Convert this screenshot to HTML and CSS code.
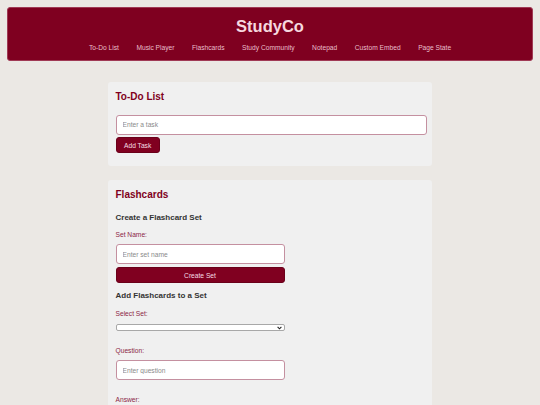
FILE: index.html
```html
<!DOCTYPE html>
<html lang="en">
<head>
<meta charset="utf-8">
<title>StudyCo</title>
<link rel="stylesheet" href="styles.css">
</head>
<body>
<header class="site-header">
  <h1 class="brand">StudyCo</h1>
  <nav class="nav">
    <a href="#">To-Do List</a>
    <a href="#">Music Player</a>
    <a href="#">Flashcards</a>
    <a href="#">Study Community</a>
    <a href="#">Notepad</a>
    <a href="#">Custom Embed</a>
    <a href="#">Page State</a>
  </nav>
</header>
<main class="main">
  <section class="panel todo">
    <h2 class="panel-title">To-Do List</h2>
    <input class="field field-wide" type="text" placeholder="Enter a task">
    <button class="btn btn-todo">Add Task</button>
  </section>
  <section class="panel cards">
    <h2 class="panel-title">Flashcards</h2>
    <h3 class="sub-title">Create a Flashcard Set</h3>
    <label class="label">Set Name:</label>
    <input class="field field-narrow" type="text" placeholder="Enter set name">
    <button class="btn btn-block">Create Set</button>
    <h3 class="sub-title sub-second">Add Flashcards to a Set</h3>
    <label class="label label-select">Select Set:</label>
    <span class="select-wrap">
      <select class="select"></select>
      <svg class="select-arrow" width="5" height="4" viewBox="0 0 5 4" aria-hidden="true"><path d="M0.6 0.8 L2.5 2.8 L4.4 0.8" fill="none" stroke="#222" stroke-width="1.1"/></svg>
    </span>
    <label class="label label-gap">Question:</label>
    <input class="field field-narrow" type="text" placeholder="Enter question">
    <label class="label label-gap">Answer:</label>
    <input class="field field-narrow" type="text" placeholder="Enter answer">
  </section>
</main>
</body>
</html>
```

FILE: styles.css
```css
* { box-sizing: border-box; }
html, body { margin: 0; padding: 0; }
body {
  background: #ebe8e4;
  font-family: "Liberation Sans", Arial, sans-serif;
  color: #333;
  padding: 7px;
}
.site-header {
  background: #7f0020;
  border: 1px solid #a03a55;
  border-radius: 3px;
  padding: 9px 0 8px;
  text-align: center;
}
.brand {
  margin: 0 0 8px;
  font-size: 16.5px;
  line-height: 19px;
  font-weight: bold;
  color: #f6d8df;
}
.nav {
  display: flex;
  justify-content: center;
  gap: 17.5px;
  line-height: 8px;
}
.nav a {
  color: #e9bfca;
  font-size: 6.67px;
  text-decoration: none;
}
.main {
  width: 324px;
  margin: 21px auto 0;
  display: flex;
  flex-direction: column;
  gap: 14.5px;
}
.panel {
  background: #f0f0f0;
  border-radius: 3px;
  padding: 8.5px 7.5px 12.5px;
  display: flex;
  flex-direction: column;
  align-items: flex-start;
}
.panel-title {
  margin: 0 0 12px;
  font-size: 10px;
  line-height: 12px;
  color: #800020;
}
.sub-title {
  margin: 0 0 9px;
  font-size: 8px;
  line-height: 9.5px;
  color: #333;
}
.sub-second { margin-top: 8px; }
.label {
  font-size: 6.67px;
  line-height: 8px;
  color: #8c2645;
  margin-bottom: 5px;
}
.label-select { margin-bottom: 6px; }
.label-gap { margin-top: 16px; }
.field {
  height: 20px;
  border: 1px solid #c490a0;
  border-radius: 3px;
  background: #fff;
  padding: 0 6px;
  font-family: "Liberation Sans", Arial, sans-serif;
  font-size: 6.67px;
  color: #333;
  outline: none;
}
.field::placeholder { color: #8a8a8a; }
.field-wide { width: 311px; }
.field-narrow { width: 169px; }
.btn {
  margin-top: 3px;
  height: 16px;
  padding: 0 7.5px;
  background: #800020;
  color: #f6dde3;
  border: 1px solid #6a001a;
  border-radius: 3px;
  font-family: "Liberation Sans", Arial, sans-serif;
  font-size: 6.67px;
}
.btn-todo { margin-top: 2.5px; }
.btn-block { width: 169px; }
.select-wrap {
  position: relative;
  display: block;
  width: 169px;
  height: 7.5px;
}
.select {
  appearance: none;
  -webkit-appearance: none;
  display: block;
  width: 169px;
  height: 7.5px;
  padding: 0;
  font-size: 4px;
  border: 1px solid #a8a8a8;
  border-radius: 2px;
  background: #fff;
}
.select-arrow {
  position: absolute;
  right: 3px;
  top: 2px;
}
```
